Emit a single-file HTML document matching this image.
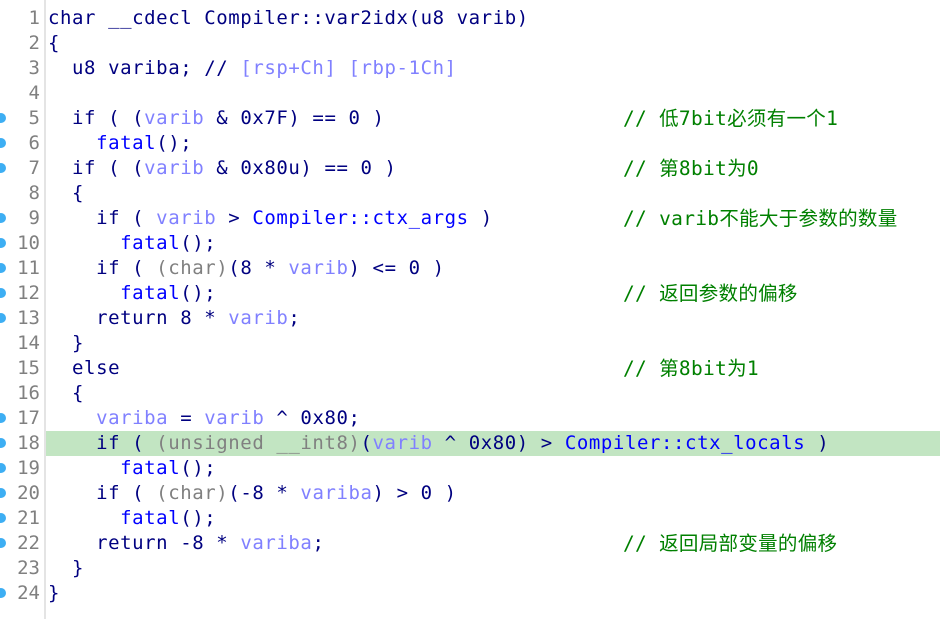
<!DOCTYPE html>
<html><head><meta charset="utf-8"><style>
body{margin:0;width:940px;height:619px;background:#fff;overflow:hidden;position:relative;font-family:"DejaVu Sans Mono","Noto Sans CJK SC",monospace;font-size:19px;letter-spacing:0.58px}
.g{position:absolute;left:0;top:0;width:44px;height:619px;border-right:2px solid #e4e4e4}
.l{position:absolute;left:0;height:25px;line-height:25px;width:940px;white-space:pre;color:#000080}
.n{position:absolute;left:0;width:40px;text-align:right;color:#808080;letter-spacing:0}
.c{position:absolute;left:48px}
.d{position:absolute;left:-4px;top:7px;width:10px;height:10px;border-radius:50%;background:#3daef3}
.hl{position:absolute;left:46px;width:894px;height:25px;background:#c2e5c2}
.v{color:#8080ff}.f{color:#0000ff}.k{color:#808080}.m{color:#008000}
.cm{position:absolute;left:623px;color:#008000;letter-spacing:0.3px;font-size:19.5px}
</style></head><body>
<div class="g"></div>
<div class="hl" style="top:431px"></div>
<div class="l" style="top:6px"><span class="n">1</span><span class="c">char __cdecl Compiler::var2idx(u8 varib)</span></div>
<div class="l" style="top:31px"><span class="n">2</span><span class="c">{</span></div>
<div class="l" style="top:56px"><span class="n">3</span><span class="c">  u8 variba; // <span class="v">[rsp+Ch] [rbp-1Ch]</span></span></div>
<div class="l" style="top:81px"><span class="n">4</span></div>
<div class="l" style="top:106px"><i class="d"></i><span class="n">5</span><span class="c">  if ( (<span class="v">varib</span> &amp; 0x7F) == 0 )</span><span class="cm">// 低7bit必须有一个1</span></div>
<div class="l" style="top:131px"><i class="d"></i><span class="n">6</span><span class="c">    <span class="f">fatal</span>();</span></div>
<div class="l" style="top:156px"><i class="d"></i><span class="n">7</span><span class="c">  if ( (<span class="v">varib</span> &amp; 0x80u) == 0 )</span><span class="cm">// 第8bit为0</span></div>
<div class="l" style="top:181px"><span class="n">8</span><span class="c">  {</span></div>
<div class="l" style="top:206px"><i class="d"></i><span class="n">9</span><span class="c">    if ( <span class="v">varib</span> &gt; <span class="f">Compiler::ctx_args</span> )</span><span class="cm">// varib不能大于参数的数量</span></div>
<div class="l" style="top:231px"><i class="d"></i><span class="n">10</span><span class="c">      <span class="f">fatal</span>();</span></div>
<div class="l" style="top:256px"><i class="d"></i><span class="n">11</span><span class="c">    if ( <span class="k">(char)</span>(8 * <span class="v">varib</span>) &lt;= 0 )</span></div>
<div class="l" style="top:281px"><i class="d"></i><span class="n">12</span><span class="c">      <span class="f">fatal</span>();</span><span class="cm">// 返回参数的偏移</span></div>
<div class="l" style="top:306px"><i class="d"></i><span class="n">13</span><span class="c">    return 8 * <span class="v">varib</span>;</span></div>
<div class="l" style="top:331px"><span class="n">14</span><span class="c">  }</span></div>
<div class="l" style="top:356px"><span class="n">15</span><span class="c">  else</span><span class="cm">// 第8bit为1</span></div>
<div class="l" style="top:381px"><span class="n">16</span><span class="c">  {</span></div>
<div class="l" style="top:406px"><i class="d"></i><span class="n">17</span><span class="c">    <span class="v">variba</span> = <span class="v">varib</span> ^ 0x80;</span></div>
<div class="l" style="top:431px"><i class="d"></i><span class="n">18</span><span class="c">    if ( <span class="k">(unsigned __int8)</span>(<span class="v">varib</span> ^ 0x80) &gt; <span class="f">Compiler::ctx_locals</span> )</span></div>
<div class="l" style="top:456px"><i class="d"></i><span class="n">19</span><span class="c">      <span class="f">fatal</span>();</span></div>
<div class="l" style="top:481px"><i class="d"></i><span class="n">20</span><span class="c">    if ( <span class="k">(char)</span>(-8 * <span class="v">variba</span>) &gt; 0 )</span></div>
<div class="l" style="top:506px"><i class="d"></i><span class="n">21</span><span class="c">      <span class="f">fatal</span>();</span></div>
<div class="l" style="top:531px"><i class="d"></i><span class="n">22</span><span class="c">    return -8 * <span class="v">variba</span>;</span><span class="cm">// 返回局部变量的偏移</span></div>
<div class="l" style="top:556px"><span class="n">23</span><span class="c">  }</span></div>
<div class="l" style="top:581px"><i class="d"></i><span class="n">24</span><span class="c">}</span></div>
</body></html>
